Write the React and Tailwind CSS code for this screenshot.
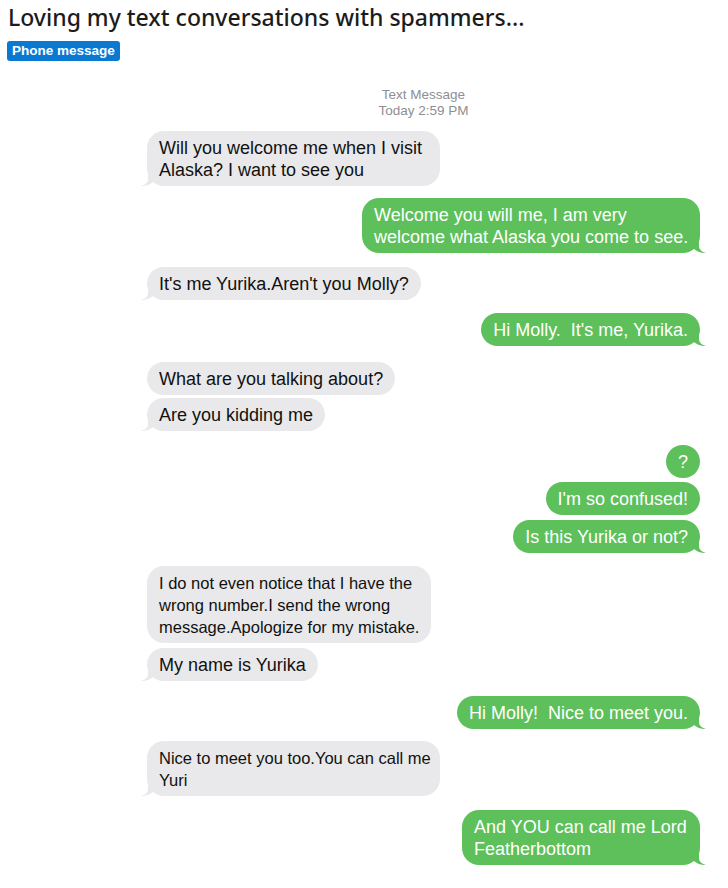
const messages = [
    { from: 'them', lines: ['Will you welcome me when I visit', 'Alaska? I want to see you'], w: 'w-[293px]', mt: 'mt-[13px]', tail: true },
    { from: 'me', lines: ['Welcome you will me, I am very', 'welcome what Alaska you come to see.'], w: 'w-[338px]', mt: 'mt-[12px]', tail: true },
    { from: 'them', lines: ["It's me Yurika.Aren't you Molly?"], mt: 'mt-[14px]', tail: true },
    { from: 'me', lines: ["Hi Molly.  It's me, Yurika."], mt: 'mt-[13px]', tail: true },
    { from: 'them', lines: ['What are you talking about?'], mt: 'mt-[16px]' },
    { from: 'them', lines: ['Are you kidding me'], mt: 'mt-[3px]', tail: true },
    { from: 'me', lines: ['?'], mt: 'mt-[14px]' },
    { from: 'me', lines: ["I'm so confused!"], mt: 'mt-[4px]' },
    { from: 'me', lines: ['Is this Yurika or not?'], mt: 'mt-[5px]', tail: true },
    { from: 'them', lines: ['I do not even notice that I have the', 'wrong number.I send the wrong', 'message.Apologize for my mistake.'], mt: 'mt-[13px]', size: 'text-[16.5px]' },
    { from: 'them', lines: ['My name is Yurika'], mt: 'mt-[5px]', tail: true },
    { from: 'me', lines: ['Hi Molly!  Nice to meet you.'], mt: 'mt-[15px]', tail: true },
    { from: 'them', lines: ['Nice to meet you too.You can call me', 'Yuri'], w: 'w-[293px]', mt: 'mt-[12px]', tail: true, size: 'text-[16.5px]' },
    { from: 'me', lines: ['And YOU can call me Lord', 'Featherbottom'], w: 'w-[238px]', mt: 'mt-[14px]', tail: true },
]

const Tail = ({ mine }) => (
    <svg
        width="12"
        height="12"
        viewBox="0 0 12 12"
        className={mine ? 'absolute -right-[6px] bottom-0 -scale-x-100' : 'absolute -left-[6px] bottom-0'}
    >
        <path d="M7 0 L7 5 C7 8.5 4 11 0 12 C4.5 12.3 9 10.8 12 8 L12 0 Z" fill={mine ? '#5ec05b' : '#e9e9eb'} />
    </svg>
)

const Bubble = ({ msg }) => {
    const mine = msg.from === 'me'
    return (
        <div
            className={`relative ${msg.mt} ${msg.w || ''} ${msg.size || 'text-[18px]'} ${mine ? 'self-end bg-[#5ec05b] text-white' : 'self-start bg-[#e9e9eb] text-[#111111]'} rounded-[17px] px-3 py-[5.5px] leading-[22px] whitespace-pre`}
        >
            {msg.lines.map((l, i) => (
                <div key={i}>{l}</div>
            ))}
            {msg.tail && <Tail mine={mine} />}
        </div>
    )
}

export default function App() {
    return (
        <div className="w-[728px] min-h-[888px] bg-white px-2 pt-[3px]" style={{ fontFamily: '"Liberation Sans", Arial, sans-serif' }}>
            <h1 className="text-[23px] leading-[28px] text-[#1c1c1c] font-medium" style={{ fontFamily: '"Noto Sans", sans-serif' }}>
                Loving my text conversations with spammers...
            </h1>
            <span className="mt-[10px] -ml-px inline-block rounded-[3px] bg-[#0a79d1] px-[5px] py-[2px] text-[13.5px] leading-[16px] font-bold text-white">
                Phone message
            </span>
            {/* chat */}
            <div className="ml-[139px] mt-[25px] flex w-[553px] flex-col pb-6">
                <div className="text-center text-[13.5px] leading-[15.5px] text-[#8e8e93]">
                    <div>Text Message</div>
                    <div>Today 2:59 PM</div>
                </div>
                {messages.map((m, i) => (
                    <Bubble key={i} msg={m} />
                ))}
            </div>
        </div>
    )
}
